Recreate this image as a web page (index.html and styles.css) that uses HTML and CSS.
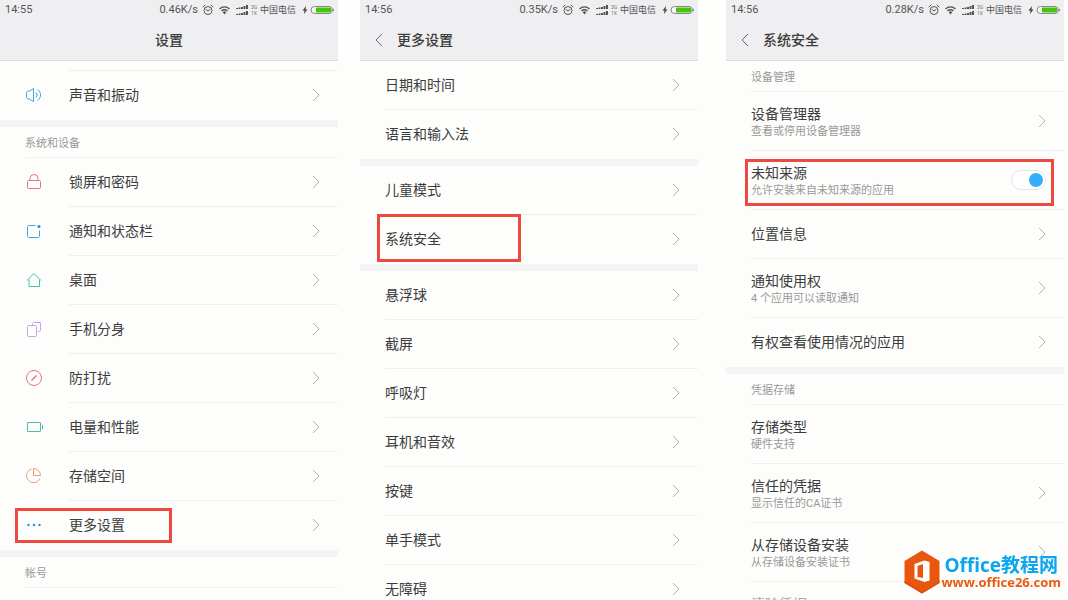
FILE: index.html
```html
<!DOCTYPE html>
<html lang="zh-CN">
<head>
    <meta charset="UTF-8">
    <meta name="viewport" content="width=device-width, initial-scale=1.0">
    <title>设置</title>
    <link rel="stylesheet" href="styles.css">
</head>
<body>

<!-- 公用图标 -->
<svg class="sprite" aria-hidden="true">
    <symbol id="chevron" viewBox="0 0 8 14"><path d="M1 1l6 6-6 6"/></symbol>
    <symbol id="back" viewBox="0 0 8 14"><path d="M7 1L1 7l6 6"/></symbol>
    <symbol id="status-icons" viewBox="0 0 48 12">
        <g fill="none" stroke="#555">
            <circle cx="6" cy="6.5" r="4"/>
            <path d="M1 3l2-2M11 3L9 1M4 5.500l2 1.500 2-1.500" stroke-linecap="round"/>
            <path d="M17.500 5a7 7 0 0 1 10 0M19.500 7a4.200 4.200 0 0 1 6 0" stroke-width="1.300"/>
        </g>
        <path d="M20.700 8.200a2.600 2.600 0 0 1 3.600 0L22.500 10.500z" fill="#555"/>
        <path d="M34 4h2v1h-2zM36.500 3.500h2V5h-2zM39 3h2v2h-2zM41.500 2h2v3h-2zM44 1h2v4h-2zM34 10h2v1h-2zM36.500 9.500h2V11h-2zM39 9h2v2h-2zM41.500 8h2v3h-2zM44 7h2v4h-2z" fill="#555"/>
    </symbol>
    <symbol id="power" viewBox="0 0 32 10">
        <path d="M4 1L0.500 5.500h2L2 9l3.500-4.500h-2z" fill="#444"/>
        <rect x="9" y="1.500" width="21.500" height="7" rx="3.500" fill="#f8f8f8" stroke="#888"/>
        <path d="M14 2.500h13a2.500 2.500 0 0 1 0 5H14z" fill="#43c50c"/>
        <path d="M31.500 4v2" stroke="#888"/>
    </symbol>
</svg>

<main class="screens">
    <section class="phone">
        <header class="top">
            <div class="status">
                <span>14:55</span>
                <span class="speed">0.46K/s</span>
                <svg class="status-icons"><use href="#status-icons"/></svg>
                <span class="net"><span>3G</span><span>1X</span></span>
                <span class="carrier">中国电信</span>
                <svg class="power"><use href="#power"/></svg>
            </div>
            <h1 class="title center">设置</h1>
        </header>
        <div class="list icons">
            <div class="peek"></div>
            <a class="row" href="#">
                <svg class="icon blue" viewBox="0 0 18 18"><path d="M8.500 2.500v13L4.500 13H3l-1.500-1.500v-5L3 5h1.500z"/><path d="M11 6.500a3.500 3.500 0 0 1 0 5M12.500 3.500a6.500 6.500 0 0 1 0 11"/></svg>
                <span class="name">声音和振动</span>
                <svg class="chevron"><use href="#chevron"/></svg>
            </a>
        </div>
        <h2 class="category">系统和设备</h2>
        <div class="list icons">
            <a class="row" href="#">
                <svg class="icon red" viewBox="0 0 18 18"><rect x="2.500" y="7.500" width="13" height="8" rx="1"/><path d="M5 7.500V5.500a4 4 0 0 1 8 0v2"/></svg>
                <span class="name">锁屏和密码</span>
                <svg class="chevron"><use href="#chevron"/></svg>
            </a>
            <a class="row" href="#">
                <svg class="icon blue" viewBox="0 0 18 18"><path d="M10.500 3.500h-7l-1 1v10l1 1h10l1-1v-6"/><circle cx="14" cy="4.500" r="1.500" fill="#1b8fd2" stroke="none"/></svg>
                <span class="name">通知和状态栏</span>
                <svg class="chevron"><use href="#chevron"/></svg>
            </a>
            <a class="row" href="#">
                <svg class="icon green" viewBox="0 0 18 18"><path d="M2 9.500l7-7 7 7M4 8.500v7h10.500v-7"/></svg>
                <span class="name">桌面</span>
                <svg class="chevron"><use href="#chevron"/></svg>
            </a>
            <a class="row" href="#">
                <svg class="icon purple" viewBox="0 0 18 18"><rect x="2.500" y="5.500" width="9" height="11" rx="1"/><path d="M7.500 5V3.500l1-1h7v8l-1 1H13"/></svg>
                <span class="name">手机分身</span>
                <svg class="chevron"><use href="#chevron"/></svg>
            </a>
            <a class="row" href="#">
                <svg class="icon red" viewBox="0 0 18 18"><circle cx="9" cy="9" r="7.500"/><path d="M6.500 11.500l5-5" stroke-width="1.500"/></svg>
                <span class="name">防打扰</span>
                <svg class="chevron"><use href="#chevron"/></svg>
            </a>
            <a class="row" href="#">
                <svg class="icon green" viewBox="0 0 18 18"><rect x="2.500" y="4.500" width="13" height="9" rx="0.500"/><path d="M17.500 7v4"/></svg>
                <span class="name">电量和性能</span>
                <svg class="chevron"><use href="#chevron"/></svg>
            </a>
            <a class="row" href="#">
                <svg class="icon orange" viewBox="0 0 18 18"><path d="M6.500 2a7 7 0 1 0 8.500 9.500"/><path d="M8.500 1.500v7h7a7 7 0 0 0-7-7z"/></svg>
                <span class="name">存储空间</span>
                <svg class="chevron"><use href="#chevron"/></svg>
            </a>
            <a class="row" href="#">
                <svg class="icon dots" viewBox="0 0 18 18"><circle cx="3.500" cy="9" r="1.200"/><circle cx="9" cy="9" r="1.200"/><circle cx="14.500" cy="9" r="1.200"/></svg>
                <span class="name">更多设置</span>
                <svg class="chevron"><use href="#chevron"/></svg>
                <span class="mark mark-more"></span>
            </a>
        </div>
        <h2 class="category">帐号</h2>
    </section>

    <section class="phone">
        <header class="top">
            <div class="status">
                <span>14:56</span>
                <span class="speed">0.35K/s</span>
                <svg class="status-icons"><use href="#status-icons"/></svg>
                <span class="net"><span>3G</span><span>1X</span></span>
                <span class="carrier">中国电信</span>
                <svg class="power"><use href="#power"/></svg>
            </div>
            <h1 class="title"><a class="back" href="#" aria-label="返回"><svg><use href="#back"/></svg></a>更多设置</h1>
        </header>
        <div class="list">
            <a class="row" href="#"><span class="name">日期和时间</span><svg class="chevron"><use href="#chevron"/></svg></a>
            <a class="row" href="#"><span class="name">语言和输入法</span><svg class="chevron"><use href="#chevron"/></svg></a>
        </div>
        <div class="list">
            <a class="row" href="#"><span class="name">儿童模式</span><svg class="chevron"><use href="#chevron"/></svg></a>
            <a class="row" href="#">
                <span class="name">系统安全</span>
                <svg class="chevron"><use href="#chevron"/></svg>
                <span class="mark mark-safe"></span>
            </a>
        </div>
        <div class="list">
            <a class="row" href="#"><span class="name">悬浮球</span><svg class="chevron"><use href="#chevron"/></svg></a>
            <a class="row" href="#"><span class="name">截屏</span><svg class="chevron"><use href="#chevron"/></svg></a>
            <a class="row" href="#"><span class="name">呼吸灯</span><svg class="chevron"><use href="#chevron"/></svg></a>
            <a class="row" href="#"><span class="name">耳机和音效</span><svg class="chevron"><use href="#chevron"/></svg></a>
            <a class="row" href="#"><span class="name">按键</span><svg class="chevron"><use href="#chevron"/></svg></a>
            <a class="row" href="#"><span class="name">单手模式</span><svg class="chevron"><use href="#chevron"/></svg></a>
            <a class="row" href="#"><span class="name">无障碍</span><svg class="chevron"><use href="#chevron"/></svg></a>
        </div>
    </section>

    <section class="phone">
        <header class="top">
            <div class="status">
                <span>14:56</span>
                <span class="speed">0.28K/s</span>
                <svg class="status-icons"><use href="#status-icons"/></svg>
                <span class="net"><span>3G</span><span>1X</span></span>
                <span class="carrier">中国电信</span>
                <svg class="power"><use href="#power"/></svg>
            </div>
            <h1 class="title"><a class="back" href="#" aria-label="返回"><svg><use href="#back"/></svg></a>系统安全</h1>
        </header>
        <h2 class="category">设备管理</h2>
        <div class="list">
            <a class="row tall" href="#">
                <span class="name">设备管理器<small>查看或停用设备管理器</small></span>
                <svg class="chevron"><use href="#chevron"/></svg>
            </a>
            <label class="row tall">
                <span class="name">未知来源<small>允许安装来自未知来源的应用</small></span>
                <input class="switch" type="checkbox" checked>
                <span class="mark mark-source"></span>
            </label>
            <a class="row" href="#"><span class="name">位置信息</span><svg class="chevron"><use href="#chevron"/></svg></a>
            <a class="row tall" href="#">
                <span class="name">通知使用权<small>4 个应用可以读取通知</small></span>
                <svg class="chevron"><use href="#chevron"/></svg>
            </a>
            <a class="row" href="#"><span class="name">有权查看使用情况的应用</span><svg class="chevron"><use href="#chevron"/></svg></a>
        </div>
        <h2 class="category">凭据存储</h2>
        <div class="list">
            <div class="row tall">
                <span class="name">存储类型<small>硬件支持</small></span>
            </div>
            <a class="row tall" href="#">
                <span class="name">信任的凭据<small>显示信任的CA证书</small></span>
                <svg class="chevron"><use href="#chevron"/></svg>
            </a>
            <a class="row tall" href="#">
                <span class="name">从存储设备安装<small>从存储设备安装证书</small></span>
                <svg class="chevron"><use href="#chevron"/></svg>
            </a>
            <div class="row disabled">
                <span class="name">清除凭据</span>
            </div>
        </div>
    </section>
</main>

<!-- 水印 -->
<a class="watermark" href="#">
    <svg class="logo" viewBox="0 0 36 44">
        <path d="M18 0.500L35.500 11v22L18 43.500 0.500 33V11z" fill="#e9570f"/>
        <path d="M0.500 33L18 43.500 35.500 33v-2L18 41.500 0.500 31z" fill="#d9500c"/>
        <path d="M10.500 14L20.500 10.500l5 1.500v18.500l-5 1.500-10-3.500zM13.500 16v11l5.500 1V14z" fill="#fff" fill-rule="evenodd"/>
    </svg>
    <span class="site">
        <span class="site-name">Office教程网</span>
        <span class="site-url">www.office26.com</span>
    </span>
</a>

</body>
</html>
```
FILE: styles.css
```css
* {
    box-sizing: border-box;
}
body {
    margin: 0;
    background: #fdfefc;
    color: #3c3c3c;
    font-family: Roboto, "Noto Sans CJK SC", sans-serif;
    font-size: 14px;
    line-height: 20px;
}
a {
    color: inherit;
    text-decoration: none;
}
.sprite {
    display: none;
}
.screens {
    display: flex;
    gap: 22px;
    height: 100vh;
    padding-right: 4px;
    overflow: hidden;
}
.phone {
    flex: 1;
    min-width: 0;
}
.phone:last-child {
    margin-left: 6px;
}

/* 顶部状态栏和标题 */
.top {
    background: #efeef0;
    border-bottom: 1px solid #dcdcdd;
}
.status {
    display: flex;
    align-items: center;
    height: 20px;
    padding: 0 4px 0 5px;
    color: #555;
    font-size: 11px;
}
.speed {
    margin-left: auto;
}
.status-icons {
    width: 48px;
    height: 12px;
    margin-left: 4px;
}
.net {
    display: flex;
    flex-direction: column;
    width: 10px;
    padding-left: 1px;
    color: #777;
    font-size: 5px;
    line-height: 6px;
}
.carrier {
    font-size: 9px;
}
.power {
    width: 32px;
    height: 10px;
    margin-left: 6px;
}
.title {
    display: flex;
    align-items: center;
    height: 40px;
    margin: 0;
    padding-left: 15px;
    font-size: 14px;
    font-weight: 500;
}
.title.center {
    justify-content: center;
    padding: 0;
}
.back {
    display: flex;
    width: 22px;
}
.back svg,
.chevron {
    width: 8px;
    height: 14px;
    fill: none;
    stroke: #b4b4b4;
}
.back svg {
    stroke: #666;
}

/* 列表 */
.category {
    height: 31px;
    margin: 0 0 0 25px;
    padding-top: 3px;
    border-bottom: 1px solid #f0f0f0;
    color: #999;
    font-size: 11px;
    font-weight: 400;
    line-height: 27px;
}
.list + .list,
.list + .category {
    position: relative;
    margin-top: 7px;
}
.list + .list::before,
.list + .category::before {
    content: "";
    position: absolute;
    top: -7px;
    left: 0;
    right: 0;
    height: 7px;
    background: #f4f4f4;
}
.list + .category::before {
    left: -25px;
}
.peek {
    height: 10px;
    margin-left: 69px;
    border-bottom: 1px solid #efefef;
}
.row {
    position: relative;
    display: flex;
    align-items: center;
    height: 49px;
    padding: 0 18px 1px 25px;
}
.row::after {
    content: "";
    position: absolute;
    left: 25px;
    right: 0;
    bottom: 0;
    border-bottom: 1px solid #efefef;
}
.icons .row::after {
    left: 69px;
}
.row:last-child::after {
    display: none;
}
.tall {
    height: 59px;
}
.icon {
    width: 18px;
    height: 18px;
    margin-right: 26px;
    fill: none;
    stroke: currentColor;
}
.blue {
    color: #3fa5dc;
}
.red {
    color: #e8717f;
}
.green {
    color: #4dbfa6;
}
.purple {
    color: #c3a4ee;
}
.orange {
    color: #f29a6e;
}
.dots {
    fill: #2493d6;
    stroke: none;
}
.name {
    flex: 1;
}
.name small {
    display: block;
    color: #999;
    font-size: 11px;
    line-height: 15px;
}
.disabled {
    height: 44px;
    color: #aaa;
}
.switch {
    appearance: none;
    display: flex;
    justify-content: flex-end;
    align-items: center;
    width: 35px;
    height: 20px;
    margin: 0;
    padding: 0 2px;
    border: 1px solid #e4e4ec;
    border-radius: 10px;
    background: #fff;
}
.switch::before {
    content: "";
    width: 14px;
    height: 14px;
    border-radius: 50%;
    background: #32aefa;
}
.switch:not(:checked) {
    justify-content: flex-start;
}

/* 红框标注 */
.mark {
    position: absolute;
    border: 3px solid #ee4843;
    z-index: 1;
}
.mark-more {
    top: 7px;
    left: 15px;
    width: 157px;
    height: 35px;
}
.mark-safe {
    top: -1px;
    left: 17px;
    width: 144px;
    height: 48px;
}
.mark-source {
    top: 8px;
    left: 19px;
    right: 10px;
    height: 47px;
}

/* 水印 */
.watermark {
    position: fixed;
    right: 7px;
    bottom: 6px;
    display: flex;
    align-items: center;
    gap: 1px;
    font-family: "Open Sans", "Noto Sans CJK SC", sans-serif;
    font-weight: 700;
}
.logo {
    width: 36px;
    height: 44px;
}
.site {
    display: flex;
    flex-direction: column;
    align-items: center;
}
.site-name {
    color: #0ba6ee;
    font-size: 19px;
    line-height: 20px;
}
.site-url {
    color: #ea5a10;
    font-size: 13px;
    line-height: 14px;
}
```
